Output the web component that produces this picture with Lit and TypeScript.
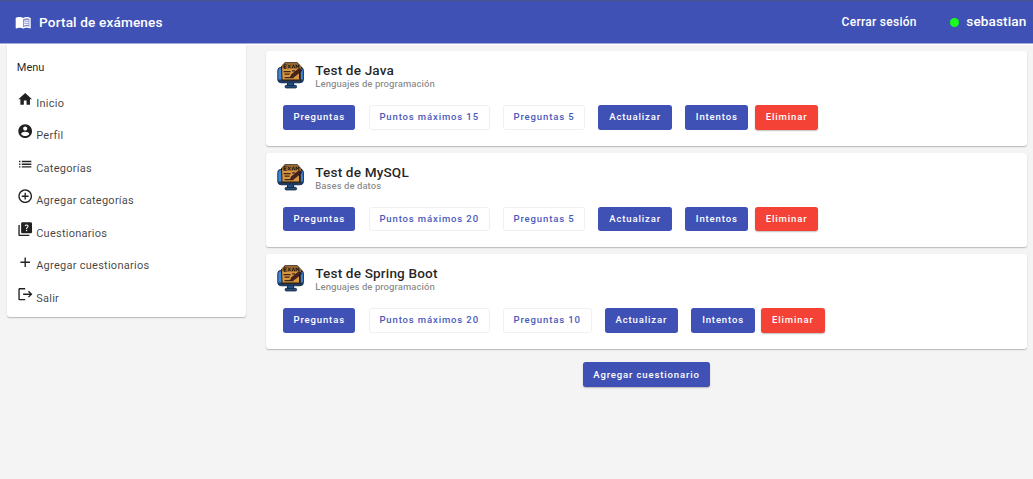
import { LitElement, html, css, svg } from "lit";
import { customElement, property } from "lit/decorators.js";

const ICONS: Record<string, unknown> = {
  book: svg`<path fill-opacity=".35" d="M12.500 7.500 17.500 6l4 .8V19l-4-.8-5 1.500z"/><path d="M21 5c-1.110-.35-2.330-.5-3.500-.5-1.950 0-4.050.4-5.500 1.500-1.450-1.100-3.550-1.500-5.500-1.500S2.450 4.900 1 6v14.650c0 .25.25.5.5.5.1 0 .15-.05.25-.05C3.100 20.450 5.050 20 6.500 20c1.950 0 4.050.4 5.500 1.500 1.350-.85 3.800-1.500 5.500-1.500 1.650 0 3.350.3 4.750 1.050.1.05.15.05.25.05.25 0 .5-.25.5-.5V6c-.6-.45-1.250-.75-2-1zm0 13.500c-1.100-.35-2.300-.5-3.500-.5-1.700 0-4.150.65-5.500 1.500V8c1.350-.85 3.800-1.500 5.500-1.500 1.200 0 2.400.15 3.500.5v11.500z"/><path d="M17.500 10.500c.88 0 1.730.09 2.500.26V9.240c-.79-.15-1.640-.24-2.500-.24-1.700 0-3.240.29-4.500.83v1.660c1.130-.64 2.700-.99 4.500-.99zM13 12.490v1.660c1.130-.64 2.700-.99 4.500-.99.88 0 1.730.09 2.500.26V11.900c-.79-.15-1.640-.24-2.500-.24-1.700 0-3.240.3-4.500.83zM17.500 14.330c-1.700 0-3.240.29-4.500.83v1.660c1.130-.64 2.700-.99 4.500-.99.88 0 1.730.09 2.500.26v-1.520c-.79-.16-1.640-.24-2.500-.24z"/>`,
  home: svg`<path d="M10 20v-6h4v6h5v-8h3L12 3 2 12h3v8z"/>`,
  account: svg`<path d="M12 2C6.480 2 2 6.480 2 12s4.480 10 10 10 10-4.480 10-10S17.520 2 12 2zm0 3c1.660 0 3 1.340 3 3s-1.340 3-3 3-3-1.340-3-3 1.340-3 3-3zm0 14.200c-2.500 0-4.710-1.280-6-3.220.03-1.990 4-3.080 6-3.080 1.990 0 5.970 1.090 6 3.080-1.290 1.940-3.500 3.220-6 3.220z"/>`,
  list: svg`<path d="M3 13h2v-2H3v2zm0 4h2v-2H3v2zm0-8h2V7H3v2zm4 4h14v-2H7v2zm0 4h14v-2H7v2zM7 7v2h14V7H7z"/>`,
  addCircle: svg`<path d="M13 7h-2v4H7v2h4v4h2v-4h4v-2h-4V7zm-1-5C6.480 2 2 6.480 2 12s4.480 10 10 10 10-4.480 10-10S17.520 2 12 2zm0 18c-4.410 0-8-3.590-8-8s3.590-8 8-8 8 3.590 8 8-3.590 8-8 8z"/>`,
  quiz: svg`<path d="M4 6H2v14c0 1.100.9 2 2 2h14v-2H4V6zm16-4H8c-1.100 0-2 .9-2 2v12c0 1.100.9 2 2 2h12c1.100 0 2-.9 2-2V4c0-1.100-.9-2-2-2zm-5.990 13c-.59 0-1.050-.47-1.050-1.050 0-.59.47-1.040 1.050-1.040.59 0 1.040.45 1.040 1.040-.01.58-.45 1.050-1.040 1.050zm2.500-6.170c-.63.93-1.230 1.210-1.560 1.810-.13.24-.18.4-.18 1.180h-1.520c0-.41-.06-1.080.26-1.650.41-.73 1.180-1.160 1.630-1.800.48-.68.21-1.940-1.140-1.940-.88 0-1.320.67-1.500 1.230l-1.370-.57C11.510 5.960 12.520 5 13.990 5c1.230 0 2.080.56 2.510 1.260.37.61.58 1.730.01 2.570z"/>`,
  add: svg`<path d="M19 13h-6v6h-2v-6H5v-2h6V5h2v6h6v2z"/>`,
  logout: svg`<path d="M4 3h8v2H4v14h8v2H4c-1.100 0-2-.9-2-2V5c0-1.100.9-2 2-2zM17.500 7 16.100 8.400 18.700 11H9v2h9.700l-2.600 2.600 1.400 1.400 5-5z"/>`,
};

@customElement("md-icon")
class MdIcon extends LitElement {
  @property() name = "";
  static styles = css`
    :host { display: block; width: 16.4px; height: 16.4px; flex: none; }
    svg { display: block; width: 100%; height: 100%; fill: currentColor; }
  `;
  render() {
    return html`<svg viewBox="0 0 24 24">${ICONS[this.name]}</svg>`;
  }
}

@customElement("exam-avatar")
class ExamAvatar extends LitElement {
  static styles = css`
    :host { display: block; width: 27.2px; height: 27.2px; flex: none; }
    svg { display: block; width: 100%; height: 100%; }
  `;
  render() {
    return html`<svg viewBox="0 0 27 27">
      <path d="M10.500 20h6v4h-6z" fill="#24598f" stroke="#10233c"/>
      <rect x="8" y="23.200" width="11.500" height="2.600" rx="1.200" fill="#24507f" stroke="#10233c" stroke-width=".8"/>
      <rect x=".8" y="5.500" width="25.400" height="15" rx="3.500" fill="#3f87d6" stroke="#172f4e" stroke-width="1"/>
      <path d="M1.300 17.500h24.400v1q-.5 2-2.500 2h-19.400q-2 0-2.500-2z" fill="#1d3a60"/>
      <path d="M4.500 4.500 8 .8h12l4.500 4.700-1.500 3V18H5z" fill="#d9963c" stroke="#231a16" stroke-width="1"/>
      <path d="M5 6.500V3.200L8 1h12l4 3.500v2z" fill="#9b682d"/>
      <path d="M7 2.800h2.500M7 2.800v3.400h2.500M7 4.500h2M11 2.800l2.500 3.400M13.500 2.800 11 6.200M15 6.200l1.300-3.400 1.300 3.400M19 6.200V2.800l1.300 2 1.300-2v3.400" fill="none" stroke="#1b1716" stroke-width=".9"/>
      <path d="M6.500 9.500h7M15 8.800h3M7.500 12h5M7.500 15.500h9" stroke="#3a2820" stroke-width="1.200"/>
      <path d="m13.500 15 1-2.500 7.500-6 2.700 2-7.500 6z" fill="#4b2023" stroke="#181416" stroke-width=".7"/>
      <path d="M22.500 9.500v8" stroke="#231a16" stroke-width="1.200"/>
    </svg>`;
  }
}

interface Exam { title: string; category: string; points: number; questions: number; }

@customElement("exam-card")
class ExamCard extends LitElement {
  @property({ attribute: false }) exam!: Exam;
  static styles = css`
    :host {
      display: block; box-sizing: border-box; height: 94.5px; padding: 10.8px 16.8px 0 11.3px;
      border-radius: 3px; background: #fff;
      box-shadow: 0 1px 1px rgba(0,0,0,.16), 0 1px 2px rgba(0,0,0,.1);
    }
    .head { display: flex; gap: 10.8px; height: 43.1px; }
    .title { font-size: 13.6px; line-height: 16px; font-weight: 500; letter-spacing: .15px; color: rgba(0,0,0,.87); white-space: nowrap; }
    .sub { font-size: 9.55px; line-height: 11px; font-weight: 500; color: rgba(0,0,0,.48); letter-spacing: .04px; white-space: nowrap; }
    .actions { display: flex; padding-left: 5.7px; }
    .btn {
      display: block; box-sizing: border-box; height: 24.5px; border: 0; border-radius: 2.7px; padding: 0 10.3px;
      font: 500 9.55px/24.5px Roboto, sans-serif; letter-spacing: .85px; white-space: nowrap;
      color: #fff; background: #3f51b5; margin-right: 13.2px;
    }
    .outline { background: #fff; color: #4a5aba; border: 1px solid #f0f0f0; line-height: 22.5px; padding: 0 9.8px; margin-right: 13px; }
    .first { padding: 0 10.5px; }
    .update { padding: 0 11px; }
    .attempts { padding: 0 10.8px; margin-right: 6.5px; }
    .warn { padding: 0 10.8px; margin-right: 0; background: #f44336; box-shadow: 0 1px 1.5px rgba(0,0,0,.25); }
  `;
  render() {
    const e = this.exam;
    return html`
      <div class="head">
        <exam-avatar></exam-avatar>
        <div><div class="title">${e.title}</div><div class="sub">${e.category}</div></div>
      </div>
      <div class="actions">
        <button class="btn first">Preguntas</button>
        <button class="btn outline">Puntos máximos ${e.points}</button>
        <button class="btn outline">Preguntas ${e.questions}</button>
        <button class="btn update">Actualizar</button>
        <button class="btn attempts">Intentos</button>
        <button class="btn warn">Eliminar</button>
      </div>`;
  }
}

@customElement("app-root")
class AppRoot extends LitElement {
  static styles = css`
    :host { display: flex; flex-direction: column; box-sizing: border-box; height: 479px; overflow: hidden; background: #f4f4f4; font-family: Roboto, sans-serif; }
    .bar {
      display: flex; align-items: center; box-sizing: border-box; height: 44px; flex: none;
      padding: 0 6.5px 0 15px; color: #fff; background: #3f51b5;
      border-top: 1px solid #4b5189; border-bottom: 1px solid #a0a9da; font-weight: 500;
    }
    .brand { margin-left: 7.7px; font-size: 13.6px; letter-spacing: .15px; }
    .space { flex: 1; }
    .logout { font-size: 12px; letter-spacing: .28px; }
    .dot { width: 9.5px; height: 9.5px; margin: 1px 7px 0 33px; border-radius: 50%; background: #19fb19; }
    .user { font-size: 13.6px; letter-spacing: .12px; margin-top: -2px; }
    .strip { height: 1px; flex: none; background: #fff; }
    .body { display: flex; align-items: flex-start; padding: 0 6px 0 6.5px; gap: 20px; }
    .side {
      width: 239.5px; height: 272.3px; flex: none; box-sizing: border-box; padding: 14px 10.3px 0;
      background: #fff; border-radius: 0 0 3px 3px; color: rgba(0,0,0,.87);
      box-shadow: 0 1px 1px rgba(0,0,0,.16), 0 1px 2px rgba(0,0,0,.1);
    }
    .heading { height: 31.8px; font-size: 11px; line-height: 17px; }
    .item { display: flex; height: 32.55px; gap: 3px; }
    .label { margin-top: 4.9px; font-size: 11px; line-height: 16px; letter-spacing: .26px; color: rgba(0,0,0,.75); }
    .main { flex: 1; min-width: 0; display: flex; flex-direction: column; gap: 7px; padding-top: 6.3px; }
    .add {
      align-self: center; height: 24.5px; margin-top: 6.5px; padding: 0 10.7px; border: 0; border-radius: 2.7px;
      color: #fff; background: #3f51b5; font: 500 9.55px/25px Roboto, sans-serif; letter-spacing: .85px;
      box-shadow: 0 1px 1.5px rgba(0,0,0,.25);
    }
  `;
  private menu = [
    ["home", "Inicio"], ["account", "Perfil"], ["list", "Categorías"], ["addCircle", "Agregar categorías"],
    ["quiz", "Cuestionarios"], ["add", "Agregar cuestionarios"], ["logout", "Salir"],
  ];
  private exams: Exam[] = [
    { title: "Test de Java", category: "Lenguajes de programación", points: 15, questions: 5 },
    { title: "Test de MySQL", category: "Bases de datos", points: 20, questions: 5 },
    { title: "Test de Spring Boot", category: "Lenguajes de programación", points: 20, questions: 10 },
  ];
  render() {
    return html`
      <header class="bar">
        <md-icon name="book"></md-icon><span class="brand">Portal de exámenes</span>
        <span class="space"></span>
        <span class="logout">Cerrar sesión</span><span class="dot"></span><span class="user">sebastian</span>
      </header>
      <div class="strip"></div>
      <div class="body">
        <nav class="side">
          <div class="heading">Menu</div>
          ${this.menu.map(([icon, label]) => html`<div class="item"><md-icon name=${icon}></md-icon><span class="label">${label}</span></div>`)}
        </nav>
        <main class="main">
          ${this.exams.map((e) => html`<exam-card .exam=${e}></exam-card>`)}
          <button class="add">Agregar cuestionario</button>
        </main>
      </div>`;
  }
}
